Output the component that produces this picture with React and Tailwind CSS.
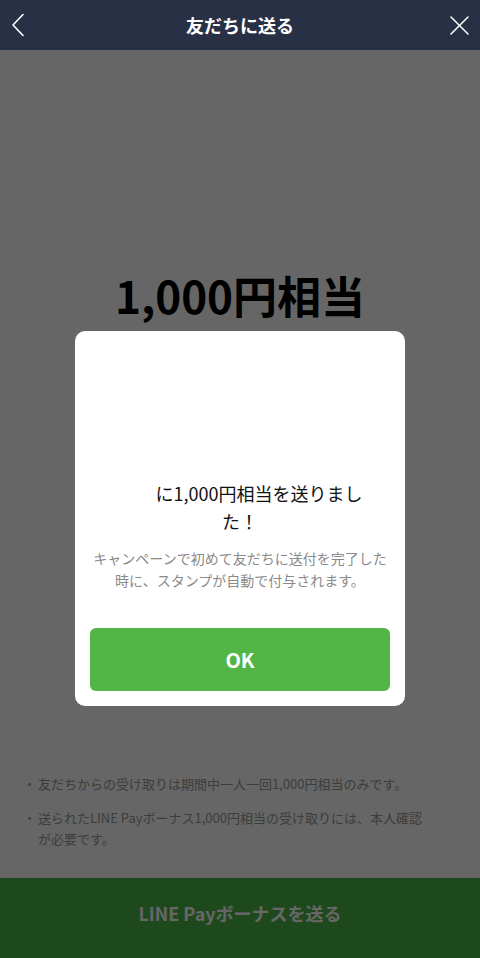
const FONT = { fontFamily: '"Noto Sans CJK JP", "Noto Sans", sans-serif' };

function Header() {
  return (
    <div className="relative flex h-[50px] shrink-0 items-center justify-center bg-[#283046]">
      <svg className="absolute left-[11px] top-[13px]" width="14" height="24" viewBox="0 0 14 24" fill="none">
        <path d="M12 1.5 L2 12 L12 22.5" stroke="white" strokeWidth="1.6" strokeLinecap="round" strokeLinejoin="round" />
      </svg>
      <h1 className="text-[18px] font-bold text-white">友だちに送る</h1>
      <svg className="absolute right-[11px] top-[16px]" width="19" height="19" viewBox="0 0 19 19" fill="none">
        <path d="M1 1 L18 18 M18 1 L1 18" stroke="white" strokeWidth="1.5" strokeLinecap="round" />
      </svg>
    </div>
  );
}

const NOTES = [
  "友だちからの受け取りは期間中一人一回1,000円相当のみです。",
  "送られたLINE Payボーナス1,000円相当の受け取りには、本人確認が必要です。",
];

function Modal() {
  return (
    <div className="mx-auto flex w-[330px] flex-col rounded-[10px] bg-white px-[15px] pb-[15px]">
      <div className="h-[148px]" />
      <p className="text-center text-[18px] leading-[28px] text-[#111]">
        <span className="inline-block w-[38px]" />
        に1,000円相当を送りまし
        <br />
        た！
      </p>
      <p className="mt-[12px] text-center text-[14px] leading-[22px] text-[#8a8a8a]">
        キャンペーンで初めて友だちに送付を完了した
        <br />
        時に、スタンプが自動で付与されます。
      </p>
      <button className="mt-[37px] h-[63px] w-full rounded-[6px] bg-[#52b646] text-[20px] font-bold text-white">
        OK
      </button>
    </div>
  );
}

export default function App() {
  return (
    <div className="relative flex h-[958px] w-[480px] flex-col overflow-hidden bg-white" style={FONT}>
      <Header />
      <main className="flex flex-1 flex-col">
        <div className="pt-[219px] text-center text-[44px] font-bold leading-[53px] text-black">
          1,000円相当
        </div>
        <ul className="mt-auto flex flex-col gap-[13px] pb-[29px] pl-[23px] pr-[46px]">
          {NOTES.map((n) => (
            <li key={n} className="flex text-[13px] leading-[21px] text-[#999]">
              <span className="w-[15px] shrink-0">・</span>
              <span>{n}</span>
            </li>
          ))}
        </ul>
      </main>
      <button className="h-[80px] shrink-0 bg-[#4cb648] pb-[10px] text-[18px] font-bold text-white">
        LINE Payボーナスを送る
      </button>
      <div className="absolute inset-x-0 bottom-0 top-[50px] bg-black/60 pt-[281px]">
        <Modal />
      </div>
    </div>
  );
}
